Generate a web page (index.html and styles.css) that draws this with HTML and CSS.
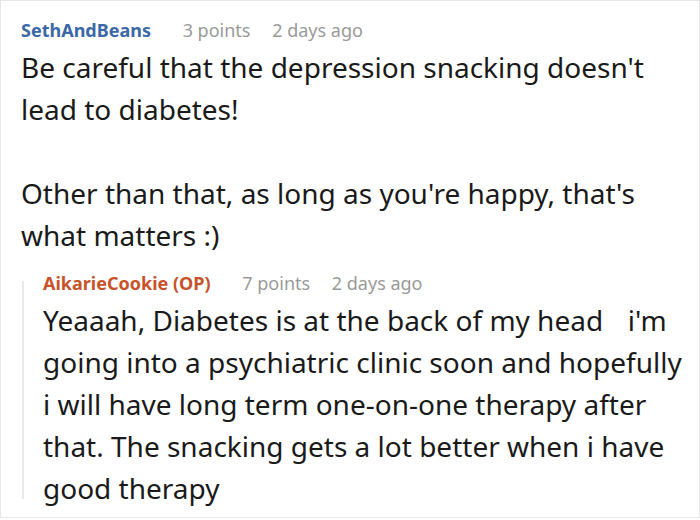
FILE: index.html
```html
<!DOCTYPE html>
<html>
<head>
<meta charset="utf-8">
<link rel="stylesheet" href="styles.css">
</head>
<body>
<div class="thread">
  <div class="comment">
    <div class="meta">
      <span class="author">SethAndBeans</span>
      <span class="info">3 points</span>
      <span class="info">2 days ago</span>
    </div>
    <div class="text">
      <p>Be careful that the depression snacking doesn't lead to diabetes!</p>
      <p>Other than that, as long as you're happy, that's what matters :)</p>
    </div>
    <div class="reply">
      <div class="meta">
        <span class="author op">AikarieCookie (OP)</span>
        <span class="info">7 points</span>
        <span class="info">2 days ago</span>
      </div>
      <div class="text">
        <p>Yeaaah, Diabetes is at the back of my head <span class="blank"></span> i'm going into a psychiatric clinic soon and hopefully i will have long term one-on-one therapy after that. The snacking gets a lot better when i have good therapy</p>
      </div>
    </div>
  </div>
</div>
</body>
</html>
```

FILE: styles.css
```css
html, body {
  margin: 0;
  padding: 0;
  background: #fff;
}
.thread {
  box-sizing: border-box;
  width: 700px;
  height: 518px;
  border: 1px solid #e6e6e6;
  overflow: hidden;
  font-family: "Noto Sans", sans-serif;
  color: #1a1a1a;
}
.comment {
  padding: 17px 10px 0 20px;
}
.meta {
  font-size: 18px;
  line-height: 24px;
  color: #9a9a9a;
  white-space: nowrap;
}
.author {
  font-weight: 700;
  color: #3b68a6;
  margin-right: 27px;
}
.author.op {
  color: #c8532a;
}
.info {
  margin-right: 17px;
}
.text {
  font-size: 28px;
  line-height: 42px;
  margin-top: 4px;
}
.text p {
  margin: 0 0 42px 0;
}
.text p:last-child {
  margin-bottom: 0;
}
.reply {
  position: relative;
  margin-top: 15px;
  margin-left: 1px;
  padding-left: 21px;
}
.reply::before {
  content: "";
  position: absolute;
  left: 0;
  top: 10px;
  bottom: 10px;
  width: 2px;
  background: #e8e8e8;
}
.blank {
  display: inline-block;
  width: 10px;
}
```
